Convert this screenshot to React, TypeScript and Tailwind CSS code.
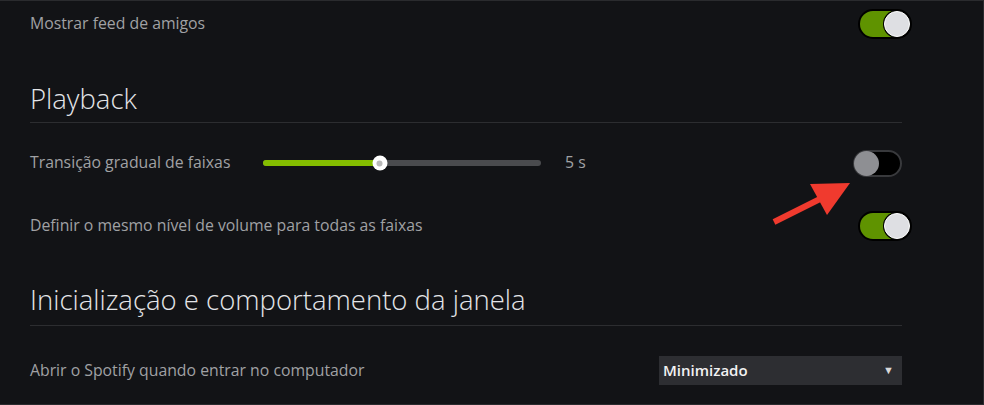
import React from 'react';

const font = { fontFamily: '"Open Sans", "Noto Sans", sans-serif' };

const ToggleOn = () => (
  <div className="-mr-[10px] flex h-[30px] w-[54px] items-center justify-end rounded-full border-2 border-black bg-[#5f9300]">
    <div className="h-[26px] w-[26px] rounded-full border border-white bg-[#dedfe3] shadow-[0_0_0_1px_#000]" />
  </div>
);

const ToggleOff = () => (
  <div className="flex h-[27px] w-[49px] items-center rounded-full border-2 border-[#38393c] bg-black">
    <div className="-ml-[1px] h-[25px] w-[25px] rounded-full bg-[#8e8f93]" />
  </div>
);

const Slider = ({ value }: { value: number }) => (
  <div className="relative h-[6px] w-[278px] rounded-full bg-[#4a4b4e]">
    <div className="h-full rounded-full bg-[#84bd00]" style={{ width: `${value}%` }} />
    <div
      className="absolute top-1/2 flex h-[15px] w-[15px] -translate-x-1/2 -translate-y-1/2 items-center justify-center rounded-full bg-white"
      style={{ left: `${value}%` }}
    >
      <div className="h-[6px] w-[6px] rounded-full bg-[#b9b9b9]" />
    </div>
  </div>
);

const Arrow = () => (
  <svg className="absolute left-[766px] top-[178px]" width="90" height="50" viewBox="0 0 90 50">
    <line x1="8" y1="43" x2="58" y2="18" stroke="#f03a2e" strokeWidth="6" />
    <polygon points="44,5 84,4 61,36" fill="#f03a2e" />
  </svg>
);

export default function App() {
  return (
    <div
      className="relative h-[405px] w-[984px] overflow-hidden border-t border-r border-b border-[#2a2b2e] bg-[#121316]"
      style={font}
    >
      <div className="w-[902px] pl-[30px]">
        <div className="flex h-[45px] items-center justify-between">
          <span className="text-[15.8px] text-[#a0a1a4]">Mostrar feed de amigos</span>
          <ToggleOn />
        </div>

        <div className="border-b border-[#2c2d30] pt-[35px] pb-[6px]">
          <h2 className="text-[27.5px] font-light leading-[35px] text-[#e4e5e8]">Playback</h2>
        </div>

        <div className="flex h-[80px] items-center justify-between">
          <div className="flex items-center">
            <span className="w-[233px] text-[15.8px] text-[#a0a1a4]">Transição gradual de faixas</span>
            <Slider value={42} />
            <span className="ml-[24px] text-[15.8px] text-[#a0a1a4]">5 s</span>
          </div>
          <ToggleOff />
        </div>

        <div className="flex h-[46px] items-center justify-between">
          <span className="text-[15.8px] text-[#a0a1a4]">Definir o mesmo nível de volume para todas as faixas</span>
          <ToggleOn />
        </div>

        <div className="border-b border-[#2c2d30] pt-[33px] pb-[8px]">
          <h2 className="text-[27.5px] font-light leading-[35px] text-[#e4e5e8]">
            Inicialização e comportamento da janela
          </h2>
        </div>

        <div className="flex h-[88px] items-center justify-between pt-[1px]">
          <span className="text-[15.8px] text-[#a0a1a4]">Abrir o Spotify quando entrar no computador</span>
          <div className="flex h-[29px] w-[243px] items-center justify-between bg-[#2d2e32] pl-[4px] pr-[8px]">
            <span className="text-[15px] font-semibold text-[#f2f2f2]">Minimizado</span>
            <span className="text-[11px] text-[#d8d8d8]">▼</span>
          </div>
        </div>
      </div>
      <Arrow />
    </div>
  );
}
